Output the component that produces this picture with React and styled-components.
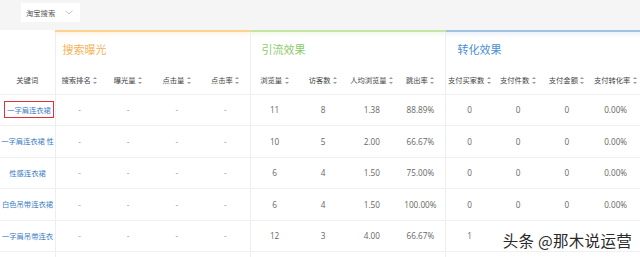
import React from 'react'
import styled, { createGlobalStyle } from 'styled-components'

const GlobalStyle = createGlobalStyle`
  html, body { margin: 0; padding: 0; background: #fff; }
  body { font-family: "Open Sans", "Noto Sans CJK SC", sans-serif; }
`

const Page = styled.div`
  position: relative;
  width: 640px;
  height: 257px;
  overflow: hidden;
  background: #fff;
`

const TopBar = styled.div`
  height: 30px;
  background: #f5f5f5;
  display: flex;
  align-items: flex-start;
  padding: 3px 0 0 21px;
  box-sizing: border-box;
`

const Select = styled.div`
  width: 59px;
  height: 19px;
  background: #fff;
  display: flex;
  align-items: center;
  gap: 10px;
  padding-left: 5px;
  box-sizing: border-box;
  font-size: 7.3px;
  color: #555;
  font-family: "Noto Sans CJK SC", sans-serif;
`

const Table = styled.table`
  border-collapse: collapse;
  table-layout: fixed;
  width: 640px;
  font-size: 7.3px;
`

const GroupTh = styled.th`
  height: 35px;
  padding: 0 0 0 ${p => p.$pad}px;
  text-align: left;
  font-weight: normal;
  font-size: 11px;
  color: ${p => p.$color};
  border-top: 2px solid ${p => p.$line};
  border-left: 1px solid #eee;
  font-family: "Noto Sans CJK SC", sans-serif;
  box-sizing: border-box;
  background: linear-gradient(${p => p.$line}33, #fff 6px);
`

const BlankTh = styled.th`
  padding: 0;
`

const HeadRow = styled.tr`
  height: 28px;
`

const Th = styled.th`
  padding: 0;
  font-weight: normal;
  color: #444;
  text-align: center;
  white-space: nowrap;
  font-family: "Noto Sans CJK SC", sans-serif;
  border-left: ${p => (p.$edge ? '1px solid #eee' : 'none')};
  border-bottom: 1px solid #f0f0f0;
`

const Sort = styled.span`
  display: inline-block;
  position: relative;
  width: 5px;
  height: 7px;
  margin-left: 2px;
  vertical-align: -1px;
  &::before, &::after {
    content: '';
    position: absolute;
    left: 0.5px;
    border-left: 2px solid transparent;
    border-right: 2px solid transparent;
  }
  &::before { top: 0; border-bottom: 2.5px solid #999; }
  &::after { bottom: 0; border-top: 2.5px solid #999; }
`

const Row = styled.tr`
  height: 31.5px;
`

const Td = styled.td`
  padding: 0;
  text-align: center;
  font-size: 8.2px;
  color: ${p => (p.$dash ? '#999' : '#666')};
  border-left: ${p => (p.$edge ? '1px solid #eee' : 'none')};
  border-bottom: 1px solid #f0f0f0;
  white-space: nowrap;
`

const KeyCell = styled.td`
  padding: 0;
  border-bottom: 1px solid #f0f0f0;
`

const Keyword = styled.div`
  width: 55px;
  overflow: hidden;
  white-space: nowrap;
  text-align: center;
  color: #3a7cc4;
  font-family: "Noto Sans CJK SC", sans-serif;
  font-size: 7.3px;
`

const Marked = styled.span`
  display: inline-block;
  border: 1.5px solid #e0303a;
  padding: 2.5px 2px;
  margin-left: 3px;
`

const Watermark = styled.div`
  position: absolute;
  right: 8px;
  bottom: 6px;
  font-family: "Noto Sans CJK SC", sans-serif;
  font-size: 15.5px;
  color: #2a2a2a;
  text-shadow: 0 0 2px #fff, 0 0 3px #fff;
  letter-spacing: 0.3px;
`

const groups = [
  { name: '搜索曝光', color: '#f5b45a', line: '#fbd490', pad: 7 },
  { name: '引流效果', color: '#8ccb6a', line: '#c6e3a8', pad: 11 },
  { name: '转化效果', color: '#4a8fd6', line: '#a2c2e2', pad: 12 },
]

const heads = ['搜索排名', '曝光量', '点击量', '点击率', '浏览量', '访客数', '人均浏览量', '跳出率', '支付买家数', '支付件数', '支付金额', '支付转化率']

const rows = [
  { kw: '一字肩连衣裙', mark: true, v: ['11', '8', '1.38', '88.89%', '0', '0', '0', '0.00%'] },
  { kw: '一字肩连衣裙 性', v: ['10', '5', '2.00', '66.67%', '0', '0', '0', '0.00%'] },
  { kw: '性感连衣裙', v: ['6', '4', '1.50', '75.00%', '0', '0', '0', '0.00%'] },
  { kw: '白色吊带连衣裙', v: ['6', '4', '1.50', '100.00%', '0', '0', '0', '0.00%'] },
  { kw: '一字肩吊带连衣', v: ['12', '3', '4.00', '66.67%', '1', '', '', ''] },
  { kw: '', v: ['', '', '', '', '', '', '', ''] },
]

function Chevron() {
  return (
    <svg width="8" height="5" viewBox="0 0 8 5">
      <path d="M0.5 0.8 L4 4 L7.5 0.8" fill="none" stroke="#bbb" strokeWidth="0.9" />
    </svg>
  )
}

export default function App() {
  return (
    <Page>
      <GlobalStyle />
      <TopBar>
        <Select>淘宝搜索<Chevron /></Select>
      </TopBar>
      <Table>
        <colgroup>
          <col style={{ width: 55 }} />
          {heads.map(h => <col key={h} />)}
        </colgroup>
        <thead>
          <tr>
            <BlankTh />
            {groups.map(g => (
              <GroupTh key={g.name} colSpan={4} $color={g.color} $line={g.line} $pad={g.pad}>{g.name}</GroupTh>
            ))}
          </tr>
          <HeadRow>
            <Th>关键词</Th>
            {heads.map((h, i) => (
              <Th key={h} $edge={i % 4 === 0}>{h}<Sort /></Th>
            ))}
          </HeadRow>
        </thead>
        <tbody>
          {rows.map((r, ri) => (
            <Row key={ri}>
              <KeyCell>
                <Keyword>{r.mark ? <Marked>{r.kw}</Marked> : r.kw}</Keyword>
              </KeyCell>
              {[0, 1, 2, 3].map(i => (
                <Td key={i} $dash $edge={i === 0}>{r.kw ? '-' : ''}</Td>
              ))}
              {r.v.map((v, i) => (
                <Td key={'v' + i} $edge={i % 4 === 0}>{v}</Td>
              ))}
            </Row>
          ))}
        </tbody>
      </Table>
      <Watermark>头条 @那木说运营</Watermark>
    </Page>
  )
}
